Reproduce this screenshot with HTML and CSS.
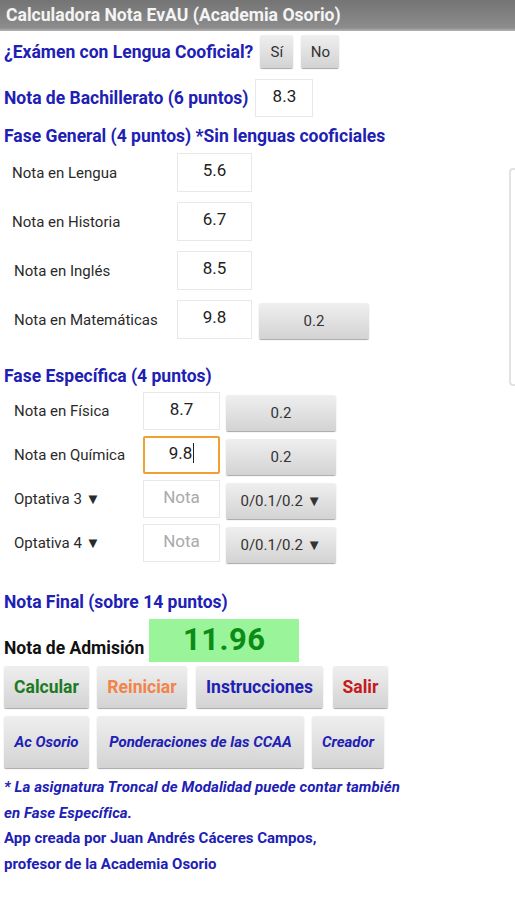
FILE: index.html
```html
<!DOCTYPE html>
<html lang="es">
<head>
  <meta charset="UTF-8" />
  <meta name="viewport" content="width=device-width, initial-scale=1" />
  <title>Calculadora Nota EvAU</title>
  <link rel="stylesheet" href="styles.css">
</head>
<body>

<div class="barra">Calculadora Nota EvAU (Academia Osorio)</div>

<div class="fila pregunta">
  <span class="titulo">¿Exámen con Lengua Cooficial?</span>
  <button class="btn btn-si">Sí</button>
  <button class="btn btn-no">No</button>
</div>

<div class="fila bach">
  <span class="titulo">Nota de Bachillerato (6 puntos)</span>
  <div class="campo campo-bach">8.3</div>
</div>

<div class="titulo seccion">Fase General (4 puntos) *Sin lenguas cooficiales</div>

<div class="fila general">
  <span class="etiqueta">Nota en Lengua</span>
  <div class="campo">5.6</div>
</div>
<div class="fila general">
  <span class="etiqueta">Nota en Historia</span>
  <div class="campo">6.7</div>
</div>
<div class="fila general">
  <span class="etiqueta ingles">Nota en Inglés</span>
  <div class="campo">8.5</div>
</div>
<div class="fila general">
  <span class="etiqueta ingles">Nota en Matemáticas</span>
  <div class="campo">9.8</div>
  <button class="btn btn-pond">0.2</button>
</div>

<div class="titulo seccion especifica-titulo">Fase Específica (4 puntos)</div>

<div class="fila especifica">
  <span class="etiqueta">Nota en Física</span>
  <div class="campo">8.7</div>
  <button class="btn btn-pond">0.2</button>
</div>
<div class="fila especifica">
  <span class="etiqueta">Nota en Química</span>
  <div class="campo activo">9.8<span class="cursor"></span></div>
  <button class="btn btn-pond">0.2</button>
</div>
<div class="fila especifica">
  <span class="etiqueta">Optativa 3 ▼</span>
  <div class="campo vacio">Nota</div>
  <button class="btn btn-pond">0/0.1/0.2 ▼</button>
</div>
<div class="fila especifica">
  <span class="etiqueta">Optativa 4 ▼</span>
  <div class="campo vacio">Nota</div>
  <button class="btn btn-pond">0/0.1/0.2 ▼</button>
</div>

<div class="titulo seccion final-titulo">Nota Final (sobre 14 puntos)</div>

<div class="fila admision">
  <span class="admision-etiqueta">Nota de Admisión</span>
  <div class="resultado">11.96</div>
</div>

<div class="fila acciones">
  <button class="btn accion calcular">Calcular</button>
  <button class="btn accion reiniciar">Reiniciar</button>
  <button class="btn accion instrucciones">Instrucciones</button>
  <button class="btn accion salir">Salir</button>
</div>

<div class="fila enlaces">
  <button class="btn enlace ac">Ac Osorio</button>
  <button class="btn enlace ponderaciones">Ponderaciones de las CCAA</button>
  <button class="btn enlace creador">Creador</button>
</div>

<div class="pie">
  <div class="nota">* La asignatura Troncal de Modalidad puede contar también</div>
  <div class="nota">en Fase Específica.</div>
  <div>App creada por Juan Andrés Cáceres Campos,</div>
  <div>profesor de la Academia Osorio</div>
</div>

<div class="borde-panel"></div>

</body>
</html>
```

FILE: styles.css
```css
body {
  margin: 0;
  background: #fff;
  font-family: Roboto, "Noto Sans", sans-serif;
  position: relative;
  min-height: 900px;
}

.barra {
  height: 31px;
  line-height: 31px;
  padding-left: 6px;
  background: linear-gradient(#747474, #8c8c8c 90%, #b5b5b5);
  color: #f4f4f4;
  font-size: 17.6px;
  font-weight: bold;
}

.fila {
  display: flex;
  align-items: center;
}

.titulo {
  color: #2020b4;
  font-size: 17.5px;
  font-weight: bold;
}

.btn {
  padding: 0;
  border: none;
  border-radius: 2px;
  background: linear-gradient(#efefef, #d3d3d3);
  box-shadow: 0 1px 1px rgba(0, 0, 0, 0.35);
  font-family: inherit;
  font-size: 15px;
  color: #333;
}

.campo {
  box-sizing: border-box;
  border: 1px solid #e8e8e8;
  background: #fff;
  text-align: center;
  font-size: 17px;
  color: #222;
  padding-top: 6px;
}

.pregunta {
  margin-top: 4px;
  height: 33px;
  padding-left: 4px;
}

.btn-si {
  margin-left: 7px;
  width: 33px;
  height: 33px;
}

.btn-no {
  margin-left: 8px;
  width: 38px;
  height: 33px;
}

.bach {
  margin-top: 11px;
  height: 38px;
  padding-left: 4px;
}

.campo-bach {
  margin-left: 7px;
  width: 58px;
  height: 38px;
}

.seccion {
  margin-top: 8px;
  line-height: 22px;
  padding-left: 4px;
}

.etiqueta {
  box-sizing: border-box;
  font-size: 15px;
  color: #2a2a2a;
}

.general {
  height: 39px;
  margin-top: 10px;
}

.seccion + .general {
  margin-top: 6px;
}

.general .etiqueta {
  width: 177px;
  padding-left: 12px;
}

.general .etiqueta.ingles {
  padding-left: 14px;
}

.general .campo {
  width: 75px;
  height: 39px;
}

.btn-pond {
  width: 110px;
  height: 36px;
  margin-left: 7px;
  margin-top: 3px;
}

.especifica-titulo {
  margin-top: 26px;
}

.especifica {
  height: 38px;
  margin-top: 6px;
}

.seccion + .especifica {
  margin-top: 5px;
}

.especifica .etiqueta {
  width: 143px;
  padding-left: 14px;
}

.especifica .campo {
  width: 77px;
  height: 38px;
}

.especifica .btn-pond {
  margin-left: 6px;
}

.campo.activo {
  border: 2px solid #f0a030;
  border-radius: 2px;
  padding-top: 5px;
}

.cursor {
  display: inline-block;
  width: 1px;
  height: 20px;
  margin-left: 1px;
  vertical-align: -4px;
  background: #222;
}

.campo.vacio {
  color: #aaa;
}

.final-titulo {
  margin-top: 29px;
}

.admision {
  margin-top: 6px;
  height: 43px;
  padding-left: 4px;
}

.admision-etiqueta {
  font-size: 17.5px;
  font-weight: bold;
  color: #111;
  margin-top: 14px;
}

.resultado {
  margin-left: 5px;
  width: 150px;
  height: 43px;
  line-height: 41px;
  background: #9af59a;
  color: #0c8c16;
  font-size: 31px;
  font-weight: bold;
  text-align: center;
  letter-spacing: 0.5px;
}

.acciones {
  margin-top: 4px;
  padding-left: 4px;
  gap: 8px;
}

.accion {
  height: 42px;
  font-size: 17.5px;
  font-weight: bold;
}

.calcular {
  width: 85px;
  color: #1b7a22;
}

.reiniciar {
  width: 90px;
  color: #f2844a;
}

.instrucciones {
  width: 127px;
  margin-left: 1px;
  color: #2020b4;
}

.salir {
  width: 55px;
  margin-left: 2px;
  color: #c41a1a;
}

.enlaces {
  margin-top: 8px;
  padding-left: 4px;
  gap: 8px;
}

.enlace {
  height: 52px;
  font-size: 15px;
  font-weight: bold;
  font-style: italic;
  color: #2020b4;
}

.ac {
  width: 85px;
}

.ponderaciones {
  width: 207px;
}

.creador {
  width: 72px;
}

.pie {
  margin-top: 7px;
  padding-left: 4px;
  color: #2020b4;
  font-size: 15px;
  font-weight: bold;
  line-height: 25.5px;
}

.nota {
  font-style: italic;
  letter-spacing: 0.1px;
}

.borde-panel {
  position: absolute;
  top: 168px;
  right: 0;
  width: 4px;
  height: 214px;
  border: 2px solid #e2e2e2;
  border-right: none;
  border-radius: 4px 0 0 4px;
}
```
